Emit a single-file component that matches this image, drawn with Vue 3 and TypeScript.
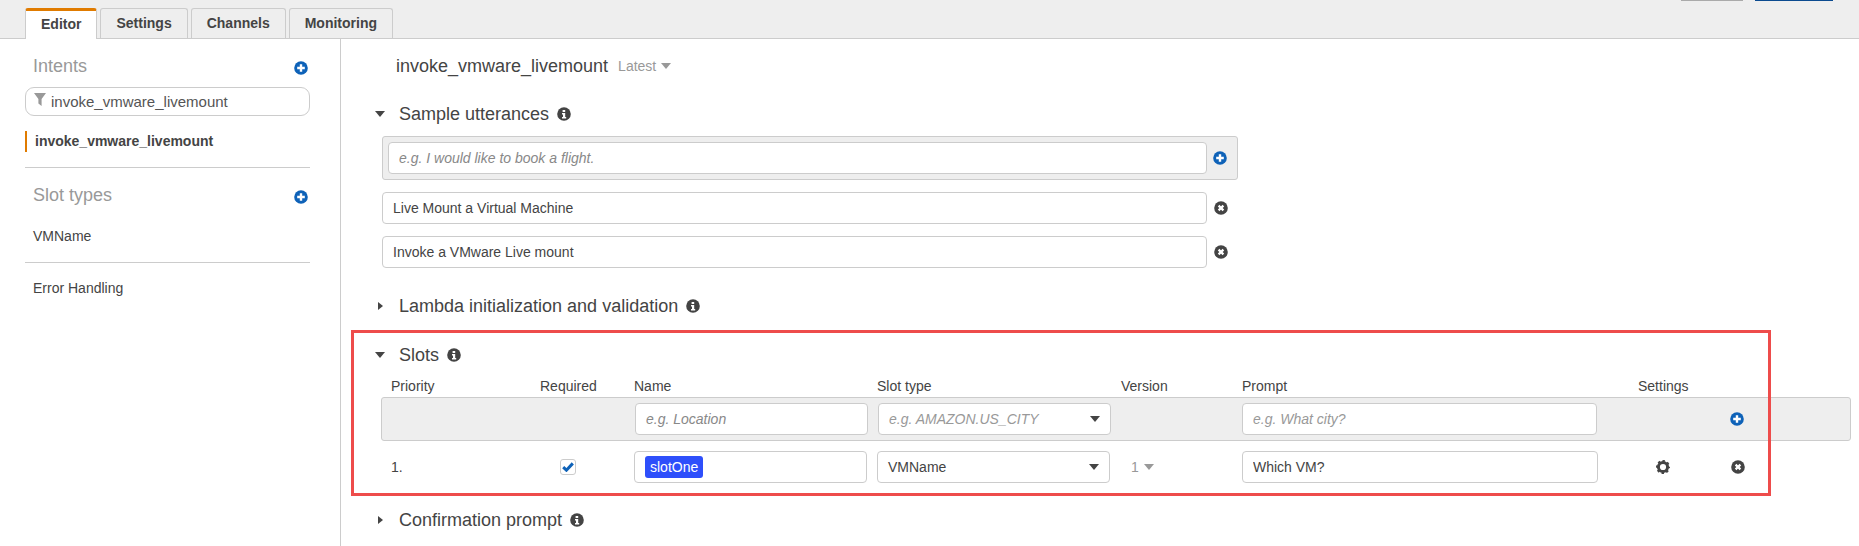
<template>
  <div class="page">
    <header class="topbar">
      <nav class="tabs">
        <div v-for="tab in tabs" :key="tab" class="tab" :class="{ active: tab === 'Editor' }">{{ tab }}</div>
      </nav>
      <div class="actions">
        <div class="btn-gray"></div>
        <div class="btn-blue"></div>
      </div>
    </header>

    <div class="body">
      <aside class="sidebar">
        <div class="side-head">
          <span>Intents</span>
          <svg class="icon add-icon" viewBox="0 0 14 14"><circle cx="7" cy="7" r="6.8" fill="#0e62b8" /><path d="M3.2 7h7.6M7 3.2v7.6" stroke="#fff" stroke-width="2.4" /></svg>
        </div>
        <div class="filter">
          <svg class="filter-icon" viewBox="0 0 12 13"><path d="M0 0h12L7.6 6v7L4.4 10.6V6z" fill="#999" /></svg>
          <span>invoke_vmware_livemount</span>
        </div>
        <div class="side-item">invoke_vmware_livemount</div>
        <div class="side-rule"></div>
        <div class="side-head second">
          <span>Slot types</span>
          <svg class="icon add-icon" viewBox="0 0 14 14"><circle cx="7" cy="7" r="6.8" fill="#0e62b8" /><path d="M3.2 7h7.6M7 3.2v7.6" stroke="#fff" stroke-width="2.4" /></svg>
        </div>
        <div class="side-link vm">VMName</div>
        <div class="side-rule rule-two"></div>
        <div class="side-link error">Error Handling</div>
      </aside>

      <main class="main">
        <div class="title-row">
          <span class="title">invoke_vmware_livemount</span>
          <span class="latest">Latest</span>
          <i class="caret-down light"></i>
        </div>

        <section class="section first">
          <h3 class="heading">
            <span class="toggle"><i class="caret-down"></i></span>
            <span>Sample utterances</span>
            <svg class="icon info" viewBox="0 0 14 14"><circle cx="7" cy="7" r="6.8" fill="#444" /><path d="M5.6 3h2.6v2H5.6zM5 6h3.2v4H9.2v1.4H5V10h1V7.4H5z" fill="#fff" /></svg>
          </h3>
          <div class="utter-add">
            <input class="field utter-new" placeholder="e.g. I would like to book a flight." readonly />
            <svg class="icon" viewBox="0 0 14 14"><circle cx="7" cy="7" r="6.8" fill="#0e62b8" /><path d="M3.2 7h7.6M7 3.2v7.6" stroke="#fff" stroke-width="2.4" /></svg>
          </div>
          <div v-for="text in utterances" :key="text" class="utter-row">
            <input class="field utter-input" :value="text" readonly />
            <svg class="icon" viewBox="0 0 14 14"><circle cx="7" cy="7" r="6.8" fill="#444" /><path d="M4.6 4.6l4.8 4.8M9.4 4.6l-4.8 4.8" stroke="#fff" stroke-width="2.2" /></svg>
          </div>
        </section>

        <section class="section">
          <h3 class="heading">
            <span class="toggle"><i class="caret-right"></i></span>
            <span>Lambda initialization and validation</span>
            <svg class="icon info" viewBox="0 0 14 14"><circle cx="7" cy="7" r="6.8" fill="#444" /><path d="M5.6 3h2.6v2H5.6zM5 6h3.2v4H9.2v1.4H5V10h1V7.4H5z" fill="#fff" /></svg>
          </h3>
        </section>

        <section class="section slots">
          <h3 class="heading">
            <span class="toggle"><i class="caret-down"></i></span>
            <span>Slots</span>
            <svg class="icon info" viewBox="0 0 14 14"><circle cx="7" cy="7" r="6.8" fill="#444" /><path d="M5.6 3h2.6v2H5.6zM5 6h3.2v4H9.2v1.4H5V10h1V7.4H5z" fill="#fff" /></svg>
          </h3>

          <div class="slot-grid labels">
            <span v-for="col in columns" :key="col">{{ col }}</span>
          </div>

          <div class="slot-grid add-row">
            <span></span>
            <span></span>
            <input class="field name-field" placeholder="e.g. Location" readonly />
            <div class="field select-field ghost">
              <span>e.g. AMAZON.US_CITY</span>
              <i class="caret-down"></i>
            </div>
            <span></span>
            <input class="field prompt-field" placeholder="e.g. What city?" readonly />
            <span></span>
            <svg class="icon end-icon" viewBox="0 0 14 14"><circle cx="7" cy="7" r="6.8" fill="#0e62b8" /><path d="M3.2 7h7.6M7 3.2v7.6" stroke="#fff" stroke-width="2.4" /></svg>
          </div>

          <div class="slot-grid slot-row">
            <span>1.</span>
            <span class="check">
              <svg viewBox="0 0 12 10" width="12" height="10"><path d="M1.2 5.2l3.2 3 6.4-6.8" fill="none" stroke="#0e62b8" stroke-width="3" /></svg>
            </span>
            <div class="field name-field">
              <span class="selected">slotOne</span>
            </div>
            <div class="field select-field">
              <span>VMName</span>
              <i class="caret-down"></i>
            </div>
            <div class="version">
              <span>1</span>
              <i class="caret-down light"></i>
            </div>
            <input class="field prompt-field" value="Which VM?" readonly />
            <svg class="icon gear" viewBox="0 0 14 14">
              <circle cx="7" cy="7" r="4.6" fill="none" stroke="#444" stroke-width="3" />
              <circle cx="7" cy="7" r="6" fill="none" stroke="#444" stroke-width="2" stroke-dasharray="2.4 2.31" stroke-dashoffset="1.2" />
            </svg>
            <svg class="icon end-icon delete" viewBox="0 0 14 14"><circle cx="7" cy="7" r="6.8" fill="#444" /><path d="M4.6 4.6l4.8 4.8M9.4 4.6l-4.8 4.8" stroke="#fff" stroke-width="2.2" /></svg>
          </div>

          <div class="callout"></div>
        </section>

        <section class="section">
          <h3 class="heading">
            <span class="toggle"><i class="caret-right"></i></span>
            <span>Confirmation prompt</span>
            <svg class="icon info" viewBox="0 0 14 14"><circle cx="7" cy="7" r="6.8" fill="#444" /><path d="M5.6 3h2.6v2H5.6zM5 6h3.2v4H9.2v1.4H5V10h1V7.4H5z" fill="#fff" /></svg>
          </h3>
        </section>
      </main>
    </div>
  </div>
</template>

<script setup lang="ts">
const tabs: string[] = ['Editor', 'Settings', 'Channels', 'Monitoring']

const utterances: string[] = ['Live Mount a Virtual Machine', 'Invoke a VMware Live mount']

const columns: string[] = ['Priority', 'Required', 'Name', 'Slot type', 'Version', 'Prompt', 'Settings']
</script>

<style>
html,
body {
  margin: 0;
  background: #fff;
}
</style>

<style scoped>
.page {
  width: 1859px;
  height: 546px;
  overflow: hidden;
  display: flex;
  flex-direction: column;
  font-family: "Liberation Sans", Arial, sans-serif;
  font-size: 14px;
  color: #444;
  box-sizing: border-box;
}

.topbar {
  height: 39px;
  flex: none;
  box-sizing: border-box;
  display: flex;
  justify-content: space-between;
  background: #eee;
  border-bottom: 1px solid #ccc;
  padding-left: 25px;
}

.tabs {
  display: flex;
  gap: 3px;
  padding-top: 8px;
}

.tab {
  height: 30px;
  box-sizing: border-box;
  padding: 0 15px;
  line-height: 29px;
  font-weight: 700;
  color: #444;
  border: 1px solid #ccc;
  border-bottom: none;
  border-radius: 3px 3px 0 0;
}

.tab.active {
  height: 31px;
  background: #fff;
  border-top: 3px solid #e07b00;
  line-height: 27px;
}

.actions {
  display: flex;
  gap: 12px;
  padding-right: 26px;
}

.btn-gray {
  width: 62px;
  height: 1px;
  background: #aaa;
}

.btn-blue {
  width: 78px;
  height: 1px;
  background: #0b4a8f;
}

.body {
  flex: 1;
  display: flex;
  min-height: 0;
}

.sidebar {
  width: 341px;
  flex: none;
  box-sizing: border-box;
  border-right: 1px solid #ccc;
  padding: 15px 30px 0 25px;
}

.side-head {
  height: 24px;
  display: flex;
  justify-content: space-between;
  align-items: center;
  padding: 0 2px 0 8px;
  font-size: 18px;
  color: #999;
}

.side-head.second {
  margin-top: 15px;
}

.add-icon {
  margin-top: 4px;
}

.filter {
  margin-top: 9px;
  height: 29px;
  box-sizing: border-box;
  display: flex;
  align-items: center;
  gap: 5px;
  padding-left: 8px;
  border: 1px solid #ccc;
  border-radius: 9px;
  font-size: 15px;
  color: #555;
}

.filter-icon {
  width: 12px;
  height: 13px;
  margin-top: -4px;
}

.side-item {
  margin-top: 15px;
  height: 21px;
  line-height: 21px;
  padding-left: 8px;
  border-left: 2px solid #e07b00;
  font-weight: 700;
}

.side-rule {
  margin-top: 15px;
  height: 1px;
  background: #ccc;
}

.side-rule.rule-two {
  margin-top: 16px;
}

.side-link {
  height: 20px;
  line-height: 20px;
  padding-left: 8px;
}

.side-link.vm {
  margin-top: 19px;
}

.side-link.error {
  margin-top: 15px;
}

.main {
  flex: 1;
  min-width: 0;
  padding: 15px 0 0 34px;
}

.title-row {
  height: 24px;
  display: flex;
  align-items: center;
  padding-left: 21px;
}

.title {
  font-size: 18px;
}

.latest {
  margin-left: 10px;
  color: #999;
}

.title-row .caret-down {
  margin-left: 5px;
}

.section {
  margin-top: 26px;
}

.section.first {
  margin-top: 24px;
}

.heading {
  margin: 0;
  height: 24px;
  display: flex;
  align-items: center;
  font-size: 18px;
  font-weight: 400;
}

.toggle {
  width: 10px;
  margin-right: 14px;
  display: flex;
  justify-content: center;
}

.info {
  margin-left: 8px;
}

.icon {
  width: 14px;
  height: 14px;
  flex: none;
  display: block;
}

.caret-down {
  display: block;
  width: 0;
  height: 0;
  border-left: 5px solid transparent;
  border-right: 5px solid transparent;
  border-top: 6px solid #444;
}

.caret-down.light {
  border-top-color: #999;
}

.caret-right {
  display: block;
  width: 0;
  height: 0;
  border-top: 4.5px solid transparent;
  border-bottom: 4.5px solid transparent;
  border-left: 5px solid #444;
}

.field {
  height: 32px;
  box-sizing: border-box;
  margin: 0;
  padding: 0 10px;
  background: #fff;
  border: 1px solid #ccc;
  border-radius: 4px;
  font-family: inherit;
  font-size: 14px;
  color: #444;
  outline: none;
}

.field::placeholder {
  color: #888;
  font-style: italic;
  opacity: 1;
}

.utter-add {
  margin: 10px 0 0 7px;
  width: 856px;
  height: 44px;
  box-sizing: border-box;
  display: flex;
  align-items: center;
  gap: 6px;
  padding: 0 5px;
  background: #eee;
  border: 1px solid #ccc;
  border-radius: 3px;
}

.utter-new {
  width: 819px;
}

.utter-row {
  margin: 12px 0 0 7px;
  display: flex;
  align-items: center;
  gap: 7px;
}

.utter-input {
  width: 825px;
}

.slots {
  position: relative;
  margin-top: 25px;
}

.slots + .section {
  margin-top: 25px;
}

.slot-grid {
  margin-left: 6px;
  width: 1470px;
  box-sizing: border-box;
  display: grid;
  grid-template-columns: 149px 94px 243px 244px 121px 396px 87px 1fr;
  align-items: center;
  padding-left: 10px;
}

.labels {
  margin-top: 9px;
  height: 21px;
  padding-bottom: 1px;
}

.add-row {
  height: 44px;
  padding-left: 9px;
  background: #eee;
  border: 1px solid #ccc;
  border-radius: 3px;
}

.slot-row {
  margin-top: 10px;
  height: 32px;
}

.name-field {
  width: 233px;
  display: flex;
  align-items: center;
}

.select-field {
  width: 233px;
  display: flex;
  align-items: center;
  justify-content: space-between;
}

.select-field.ghost {
  color: #999;
  font-style: italic;
}

.prompt-field {
  width: 356px;
}

.add-row .name-field,
.add-row .select-field {
  margin-left: 1px;
}

.add-row .prompt-field {
  width: 355px;
}

.add-row .prompt-field::placeholder {
  color: #999;
}

.check {
  width: 16px;
  height: 16px;
  box-sizing: border-box;
  margin-left: 20px;
  display: flex;
  align-items: center;
  justify-content: center;
  border: 1px solid #ccc;
  border-radius: 3px;
}

.selected {
  padding: 0 5px;
  height: 22px;
  line-height: 22px;
  background: #2e4ffb;
  color: #fff;
  border-radius: 3px;
}

.version {
  display: flex;
  align-items: center;
  gap: 5px;
  padding-left: 10px;
  color: #999;
}

.gear {
  margin-left: 18px;
}

.end-icon {
  margin-left: 5px;
}

.end-icon.delete {
  margin-left: 6px;
}

.callout {
  position: absolute;
  top: -13px;
  left: -24px;
  width: 1420px;
  height: 166px;
  box-sizing: border-box;
  border: 3px solid #ee4c4b;
  pointer-events: none;
}
</style>
